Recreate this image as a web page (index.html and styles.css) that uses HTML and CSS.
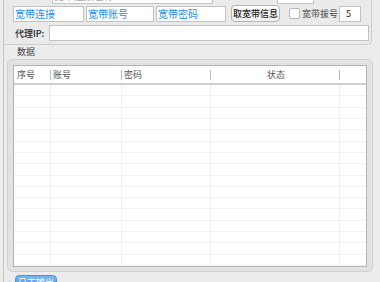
FILE: index.html
```html
<!DOCTYPE html>
<html lang="zh-CN">
<head>
    <meta charset="UTF-8">
    <title>宽带拨号</title>
    <link rel="stylesheet" href="styles.css">
</head>
<body>
    <div class="frame">
        <div class="top">
            <div class="row row0">
                <span class="lbl0">拨号账户:</span>
                <div class="field f0a">宽带连接名称</div>
                <span class="lbl0 gray">拨号间隔秒:</span>
                <div class="field f0b"></div>
            </div>
            <div class="row row1">
                <div class="field blue fa">宽带连接</div>
                <div class="field blue fb">宽带账号</div>
                <div class="field blue fc">宽带密码</div>
                <button class="btn">取宽带信息</button>
                <span class="check"></span>
                <span class="check-label">宽带拔号</span>
                <div class="field num">5</div>
            </div>
            <div class="row row2">
                <span class="proxy-label">代理IP:</span>
                <div class="field proxy"></div>
            </div>
        </div>

        <div class="group-title">数据</div>
        <div class="group">
            <div class="table">
                <div class="thead">
                    <div class="th">序号</div>
                    <div class="th">账号</div>
                    <div class="th">密码</div>
                    <div class="th center">状态</div>
                    <div class="th last"></div>
                </div>
                <div class="tbody" id="rows"></div>
            </div>
        </div>

        <div class="tabs">
            <span class="arrow"></span>
            <span class="tab">日志输出</span>
        </div>
    </div>

    <script>
        var rows = document.getElementById('rows');
        for (var i = 0; i < 16; i++) {
            var tr = document.createElement('div');
            tr.className = 'tr';
            for (var j = 0; j < 5; j++) {
                var td = document.createElement('div');
                td.className = 'td';
                tr.appendChild(td);
            }
            rows.appendChild(tr);
        }
    </script>
</body>
</html>
```

FILE: styles.css
```css
body {
    margin: 0;
    background-color: #ececec;
    font-family: "Noto Sans CJK SC", "Liberation Sans", sans-serif;
    font-size: 9px;
    color: #222;
    overflow: hidden;
    height: 282px;
}
.frame {
    margin-left: 3px;
    width: 368px;
    height: 300px;
    border-left: 1px solid #c4c4c4;
}
.top {
    margin-top: -13px;
    border-right: 1px solid #cdcdcd;
    border-bottom: 1px solid #cdcdcd;
    border-radius: 0 0 5px 0;
    background-color: #eaeaea;
    padding-bottom: 1px;
}
.row {
    display: flex;
    align-items: center;
}
.field {
    box-sizing: border-box;
    height: 16px;
    background-color: #fff;
    border: 1px solid #c3c3c3;
    line-height: 14px;
    padding-left: 1px;
    font-size: 10px;
    white-space: nowrap;
    overflow: hidden;
}
.row0 {
    height: 17px;
    margin-bottom: 1px;
}
.lbl0 {
    margin-left: 8px;
    width: 40px;
    color: #222;
}
.lbl0.gray {
    margin-left: 5px;
    width: 59px;
    color: #777;
}
.f0a {
    margin-left: 0;
    width: 161px;
    color: #aaa;
}
.f0b {
    width: 37px;
}
.row1 {
    height: 17px;
}
.blue {
    color: #2a8ef0;
}
.fa {
    margin-left: 9px;
    width: 71px;
}
.fb {
    margin-left: 2px;
    width: 68px;
}
.fc {
    margin-left: 2px;
    width: 70px;
}
.btn {
    margin-left: 5px;
    width: 49px;
    height: 17px;
    padding: 0;
    font-family: inherit;
    font-size: 9px;
    font-weight: 500;
    color: #222;
    background: linear-gradient(#ffffff, #f0f0f0);
    border: 1px solid #b5b5b5;
    border-radius: 4px;
}
.check {
    box-sizing: border-box;
    margin-left: 9px;
    width: 11px;
    height: 11px;
    background-color: #fff;
    border: 1px solid #b8b8b8;
    border-radius: 2px;
}
.check-label {
    margin-left: 2px;
    width: 37px;
    color: #444;
}
.num {
    width: 22px;
    padding-left: 6px;
    color: #222;
    font-size: 9px;
}
.row2 {
    height: 16px;
    margin-top: 3px;
    padding-bottom: 2px;
}
.proxy-label {
    margin-left: 11px;
    width: 34px;
    font-weight: 500;
    color: #222;
}
.proxy {
    width: 320px;
}
.group-title {
    height: 14px;
    line-height: 14px;
    margin-left: 13px;
    color: #444;
}
.group {
    box-sizing: border-box;
    margin-left: 3px;
    width: 366px;
    height: 213px;
    border: 1px solid #d0d0d0;
    border-radius: 5px;
    background-color: #e2e2e2;
    padding: 5px 4px 0 5px;
}
.table {
    box-sizing: border-box;
    width: 354px;
    height: 202px;
    background-color: #fff;
    border: 1px solid #b4b4b4;
    border-bottom-width: 2px;
}
.thead,
.tr {
    display: grid;
    grid-template-columns: 36px 71px 89px 129px 27px;
}
.thead {
    height: 17px;
    border-bottom: 2px solid #cfcfcf;
}
.th {
    padding-left: 3px;
    line-height: 17px;
    color: #555;
    position: relative;
}
.th.center {
    text-align: center;
}
.th + .th::before {
    content: "";
    position: absolute;
    left: 0;
    top: 4px;
    height: 10px;
    border-left: 1px solid #bdbdbd;
}
.tbody {
    height: 181px;
    display: grid;
    grid-template-rows: repeat(16, 1fr);
}
.tr {
    border-bottom: 1px solid #f1f1f1;
}
.td + .td {
    border-left: 1px solid #f0f0f0;
}
.tabs {
    position: relative;
    height: 11px;
    margin-top: 1px;
    border-bottom: 1px solid #d0d0d0;
}
.arrow {
    position: absolute;
    left: 2px;
    top: 8px;
    border-right: 4px solid #aaa;
    border-top: 3px solid transparent;
    border-bottom: 3px solid transparent;
}
.tab {
    position: absolute;
    left: 11px;
    top: 2px;
    width: 40px;
    height: 14px;
    line-height: 13px;
    text-align: center;
    color: #fff;
    background: linear-gradient(#7ab6f6, #3d8de8);
    border: 1px solid #4a8fd8;
    border-radius: 4px 4px 0 0;
}
```
